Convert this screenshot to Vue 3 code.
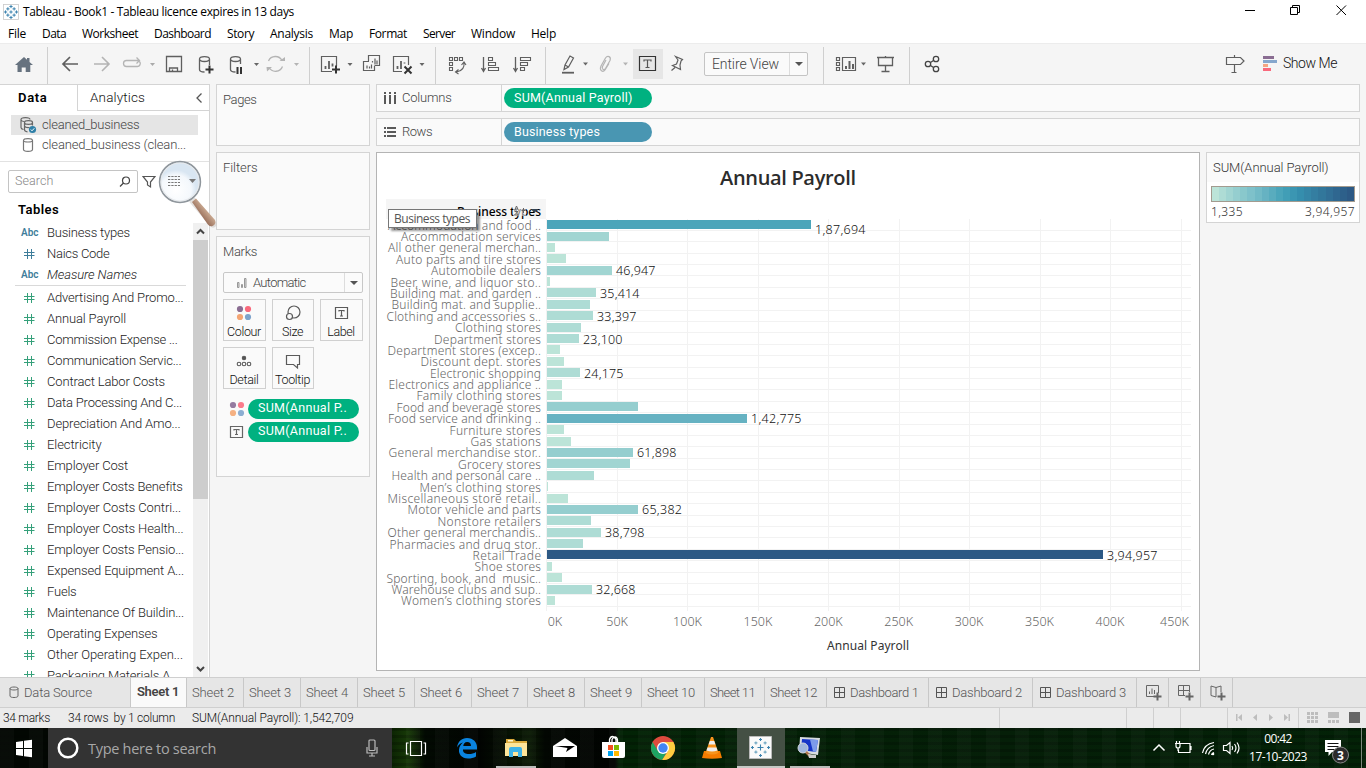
<script setup>
const fit = (el, { value }) => {
  if (!value) return
  el.style.letterSpacing = '0px'
  const n = el.textContent.length
  const w = el.getBoundingClientRect().width
  if (n) el.style.letterSpacing = ((value - w) / n).toFixed(3) + 'px'
}
const vFit = { mounted: fit }

const menus = [['File', 18], ['Data', 24], ['Worksheet', 56], ['Dashboard', 57], ['Story', 27], ['Analysis', 43], ['Map', 24], ['Format', 38], ['Server', 32], ['Window', 44], ['Help', 25]]

const dims = [['abc', 'Business types', 83], ['num', 'Naics Code', 62.5], ['abc', 'Measure Names', 90]]
const measures = [
  ['Advertising And Promo...', 136.5], ['Annual Payroll', 79], ['Commission Expense ...', 130.5], ['Communication Servic...', 134.5],
  ['Contract Labor Costs', 118], ['Data Processing And C...', 135], ['Depreciation And Amo...', 133.5], ['Electricity', 54.5],
  ['Employer Cost', 81], ['Employer Costs Benefits', 135.5], ['Employer Costs Contri...', 134], ['Employer Costs Health...', 136.5],
  ['Employer Costs Pensio...', 137], ['Expensed Equipment A...', 137], ['Fuels', 29.5], ['Maintenance Of Buildin...', 137],
  ['Operating Expenses', 110.5], ['Other Operating Expen...', 136], ['Packaging Materials A...', 132]
]

const palette = ['#bce4d8', '#aedcd5', '#a1d5d2', '#95cecf', '#89c8cc', '#7ec1ca', '#72bac6', '#66b2c2', '#59acbe', '#4ba5ba', '#419eb6', '#3b96b2', '#358ead', '#3586a7', '#347ea1', '#32779b', '#316f96', '#2f6790', '#2d608a', '#2c5985']

// label, label left edge, bar end, data label, data label width
const rows = [
  ['Accommodation and food ..', 388, 811, '1,87,694', 50.5], ['Accommodation services', 401, 609], ['All other general merchan..', 388, 555],
  ['Auto parts and tire stores', 396, 566], ['Automobile dealers', 431, 612, '46,947', 39.5], ['Beer, wine, and liquor sto..', 390.5, 550],
  ['Building mat. and garden ..', 390, 596, '35,414', 39.5], ['Building mat. and supplie..', 391.5, 590], ['Clothing and accessories s..', 386.5, 593, '33,397', 39.5],
  ['Clothing stores', 455, 581], ['Department stores', 434, 579, '23,100', 39.5], ['Department stores (excep..', 387.5, 560],
  ['Discount dept. stores', 420.5, 564], ['Electronic shopping', 430, 580, '24,175', 39.5], ['Electronics and appliance ..', 388.5, 562],
  ['Family clothing stores', 416.5, 562], ['Food and beverage stores', 396.5, 638], ['Food service and drinking ..', 388, 747, '1,42,775', 50.5],
  ['Furniture stores', 449.5, 564], ['Gas stations', 470.5, 571], ['General merchandise stor..', 388.5, 633, '61,898', 39.5],
  ['Grocery stores', 458, 630], ['Health and personal care ..', 391.5, 594], ['Men’s clothing stores', 419.5, 548],
  ['Miscellaneous store retail..', 387.5, 568], ['Motor vehicle and parts', 407.5, 638, '65,382', 40], ['Nonstore retailers', 437.5, 591],
  ['Other general merchandis..', 387.5, 601, '38,798', 39.5], ['Pharmacies and drug stor..', 389.5, 583], ['Retail Trade', 472.5, 1103, '3,94,957', 50.5],
  ['Shoe stores', 474.5, 552], ['Sporting, book, and  music..', 386.5, 562], ['Warehouse clubs and sup..', 391.5, 592, '32,668', 39.5],
  ['Women’s clothing stores', 401, 555]
]
const step = 11.39
const bars = rows.map(([name, left, end, label, lw], i) => {
  const v = (end - 547) / 1.41 * 1000
  return {
    name, left, end, label, lw,
    w: 541 - left,
    y: Math.round(220.15 + i * step),
    base: Math.round(229.6 + i * step),
    lineY: Math.round(219.5 + (i + 1) * step) - 0.5,
    lx: end + 4,
    ly: Math.round(229.6 + i * step) + (i === 0 ? 4 : 0),
    fill: palette[Math.max(0, Math.min(19, Math.floor((v - 1335) / 19681)))]
  }
})
const ticks = Array.from({ length: 10 }, (_, i) => ({ x: Math.round(546 + i * 70.5) + 0.5, t: i * 50 + 'K' }))
const tickX = i => (i === 0 ? 555 : i === 9 ? 1174.5 : 546.7 + i * 70.4)

const sheets = [[57, 42], [57, 42], [57, 42], [57, 42], [57, 42], [57, 42], [56, 42], [57, 42], [57, 42], [63, 48], [60, 45], [62, 47]]
const dashes = [[102, 68.5], [104, 70], [104, 70]]
const dots = [[-7, 0], [7, 0], [0, -7], [0, 7], [0, 0], [-4, -4], [4, -4], [-4, 4], [4, 4]]
</script>

<template>
  <div class="screen">
    <header class="titlebar">
      <svg class="logo" width="16" height="16" viewBox="-8 -8 16 16">
        <rect x="-7.5" y="-7.5" width="15" height="15" fill="#fff" stroke="#c9c9c9" stroke-width=".8" />
        <path v-for="(d, i) in dots" :key="i" :d="`M${d[0] * .78 - 1.6} ${d[1] * .78}h3.2M${d[0] * .78} ${d[1] * .78 - 1.6}v3.2`" stroke="#3b82ae" stroke-width="1" />
      </svg>
      <span v-fit="271">Tableau - Book1 - Tableau licence expires in 13 days</span>
      <svg class="winbtns" width="120" height="22" viewBox="1240 0 120 22" fill="none" stroke="#000" stroke-width="1">
        <path d="M1245 10.5h10M1290.500 7.500h7v7h-7zM1292.500 7v-1.500h7v7h-1.500M1336.500 5.500l9.500 9.500M1346 5.500l-9.500 9.500" />
      </svg>
    </header>
    <nav class="menubar"><span v-for="m in menus" :key="m[0]" :style="{ width: m[1] + 'px' }"><span v-fit="m[1]">{{ m[0] }}</span></span></nav>

    <div class="toolbar">
      <svg class="grp" width="47" height="41" viewBox="0 43 47 41"><path d="M15 65l9-8 3 2.700v-1.700h2.500v4l3.500 3h-2.700v7h-4.600v-4.500h-4v4.500h-4.200v-7z" fill="#66727f" /></svg>
      <svg class="grp sep" width="262" height="41" viewBox="47 43 262 41" fill="none" stroke="#5f5f5f" stroke-width="1.300">
        <path d="M78 64H63.500M70 57l-7 7 7 7" stroke-width="1.700" />
        <path d="M94 64h14.500M102 57l7 7-7 7" stroke="#b4b4b4" stroke-width="1.600" />
        <path d="M132 60.500h-5.500a3 3 0 000 6h10.500a3 3 0 002.500-5M131.500 60.500h8M136.500 57.500l3 3-3 3" stroke="#b4b4b4" />
        <path d="M150 63h5l-2.500 3z" fill="#aaa" stroke="none" />
        <path d="M166.500 56.500h15v15h-15zM169.500 71v-3h8v3M172.500 71v-1.500" />
        <path d="M199.500 59v10.500q0 2.500 5 2.500M199.500 59c0-3.300 10-3.300 10 0s-10 3.300-10 0M209.500 59v6" />
        <path d="M209.500 65.500v8M205.500 69.500h8" stroke="#333" stroke-width="2" />
        <path d="M230.500 59v10.500q0 2.500 5 2.500M230.500 59c0-3.300 10-3.300 10 0s-10 3.300-10 0M240.500 59v5" />
        <path d="M237.500 67v7M241 67v7" stroke="#333" stroke-width="2" />
        <path d="M254 63h5l-2.500 3z" fill="#666" stroke="none" />
        <path d="M268.500 61a7.500 7.500 0 0113.500-.500M282.500 66.500a7.500 7.500 0 01-13.500 1" stroke="#b4b4b4" />
        <path d="M279.500 61h5.500v-4zM266.500 67h5.500l-5 4.500z" fill="#b4b4b4" stroke="none" />
        <path d="M294 63h5l-2.500 3z" fill="#b4b4b4" stroke="none" />
      </svg>
      <svg class="grp sep" width="126" height="41" viewBox="309 43 126 41" fill="none" stroke="#5f5f5f" stroke-width="1.200">
        <path d="M332 71.500h-10.500v-15h15V66" />
        <path d="M325.500 69v-3M329 69v-8M332.500 66.500v-3" stroke-width="1.800" />
        <path d="M336 65.500v8M332 69.500h8" stroke="#333" stroke-width="2" />
        <path d="M347.500 63h5l-2.500 3z" fill="#666" stroke="none" />
        <path d="M368.500 61v-5.500h11v10h-5M372.500 62.500v-1.500M375 64.500v-6M377 64.500v-4M369 61.500h-5.500v9h11V66M367 68.500v-3M369.500 68.500v-2M371.500 68.500v-4" />
        <path d="M402 71.500h-8.500v-15h15V65" />
        <path d="M397.500 69v-3M401 69v-8M404.500 63.500v-1" stroke-width="1.800" />
        <path d="M404.500 66.500l7 7M411.500 66.500l-7 7" stroke="#333" stroke-width="2" />
        <path d="M419.500 63h5l-2.500 3z" fill="#666" stroke="none" />
      </svg>
      <svg class="grp sep" width="110" height="41" viewBox="435 43 110 41" fill="none" stroke="#5f5f5f" stroke-width="1.100">
        <path d="M449.500 57.500h3v3h-3zM454.500 57.500h3v3h-3zM459.500 57.500h3v3h-3zM449.500 62.500h3v3h-3zM449.500 67.500h3v3h-3z" />
        <path d="M464 62.500q1 8-7.500 9.500M461.500 65l2.500-3 2 3M458.500 69.500l-3 2.500 3 2" />
        <path d="M483.500 57v14M481.500 68l2 3.500 2-3.500" stroke-width="1.300" />
        <path d="M488.500 57.500h4v3h-4zM488.500 62.500h7v3h-7zM488.500 67.500h10v3h-10z" />
        <path d="M515.500 57v14M513.500 68l2 3.500 2-3.500" stroke-width="1.300" />
        <path d="M520.500 57.500h10v3h-10zM520.500 62.500h7v3h-7zM520.500 67.500h4v3h-4z" />
      </svg>
      <svg class="grp sep" width="159" height="41" viewBox="545 43 159 41" fill="none" stroke="#5f5f5f" stroke-width="1.200">
        <path d="M564 69.500l1-4.500 5-9 3.500 2-5 9zM565 65l3.500 2" />
        <path d="M562 72.700h12" stroke-width="1.800" />
        <path d="M583 62.500h5l-2.500 3z" fill="#666" stroke="none" />
        <path d="M606 60l-3.500 6.500c-1 3 1.500 4 3 2l4.500-8c1.500-4-2.500-5.500-4.500-2.500l-4.500 8c-2 5 2 6.500 4 4l4-6.500" stroke="#b4b4b4" />
        <path d="M623 62.500h5l-2.500 3z" fill="#b4b4b4" stroke="none" />
        <path d="M633 49h30v30h-30z" fill="#e6e6e6" stroke="none" />
        <path d="M639.500 56.500h16v14h-16z" stroke="#333" />
        <path d="M644 61.500v-1.500h7v1.500M647.500 60v7.500M645.500 67.500h4" stroke="#555" />
        <path d="M675.500 56.500l7 3-1.500 1.500-1 4 .500 4.500-8-4 4-1.500 1.500-4zM675 67.500l-3.500 3" />
      </svg>
      <div class="viewsel"><span v-fit="67">Entire View</span><i></i></div>
      <svg class="grp" width="15" height="41" />
      <svg class="grp sep" width="86" height="41" viewBox="823 43 86 41" fill="none" stroke="#5f5f5f" stroke-width="1.200">
        <path d="M836.500 57.500h3v3h-3zM836.500 62.500h3v3h-3zM836.500 67.500h3v3h-3zM842.500 57.500h13v13h-13z" />
        <path d="M846 69v-3M849.500 69v-8M853 69v-5" stroke-width="2" />
        <path d="M861 62.500h5l-2.500 3z" fill="#666" stroke="none" />
        <path d="M877 57.500h17M878.500 57.500v8h14v-8M885.500 56v2M885.500 66v5.500M881.500 71.500h8" stroke-width="1.300" />
      </svg>
      <svg class="grp sep" width="60" height="41" viewBox="909 43 60 41" fill="none" stroke="#444" stroke-width="1.300">
        <circle cx="928" cy="64" r="2.700" /><circle cx="936" cy="59" r="2.700" /><circle cx="936" cy="69" r="2.700" /><path d="M930.500 62.500l3-2M930.500 65.500l3 2" />
      </svg>
      <div class="showme">
        <svg width="60" height="41" viewBox="1223 43 60 41" fill="none" stroke="#5f5f5f" stroke-width="1.200">
          <path d="M1226.500 57.500h14l3.500 3.500-3.500 3.500h-14zM1234.500 55v2M1234.500 65v7M1231.500 72.500h5" />
          <g stroke="none"><path fill="#8a6d92" d="M1263 56h11v3h-11z" /><path fill="#86a7cd" d="M1263 60h14v3h-14z" /><path fill="#f4a582" d="M1263 64h5v3h-5z" /><path fill="#f9697c" d="M1263 68h8v3h-8z" /></g>
        </svg>
        <span v-fit="54">Show Me</span>
      </div>
    </div>

    <main class="work">
      <aside class="datapane">
        <div class="tabs2"><div class="on"><b v-fit="29.5">Data</b></div><div class="off"><span v-fit="55">Analytics</span>
          <svg width="8" height="12" viewBox="0 0 8 12"><path d="M6.500 1.500L2 6l4.500 4.500" fill="none" stroke="#555" stroke-width="1.300" /></svg></div></div>
        <div class="sources">
          <div class="src sel">
            <svg width="18" height="18" viewBox="19 116 18 18" fill="none" stroke="#666" stroke-width="1.200">
              <path d="M21 119.500c0-2.600 9-2.600 9 0M21 119.500v8q0 1.500 2.500 2M21 120q1 1.500 3 1.500M24.500 122.500c0-2.400 8-2.400 8 0s-8 2.400-8 0v7q0 2 3 2.300M32.500 122.500v3M24.500 126q1 2 5 1.500" />
              <circle cx="32.500" cy="129.500" r="3.600" fill="#2f80a8" stroke="none" /><path d="M30.800 129.500l1.200 1.300 2.300-2.500" stroke="#fff" stroke-width="1" />
            </svg><span v-fit="97.500">cleaned_business</span>
          </div>
          <div class="src">
            <svg width="18" height="18" viewBox="19 136 18 18" fill="none" stroke="#777" stroke-width="1.200"><path d="M23.500 140.500c0-2.500 9-2.500 9 0v9c0 2.500-9 2.500-9 0zM23.500 140.500c0 2 9 2 9 0" /></svg>
            <span v-fit="144">cleaned_business (clean...</span>
          </div>
        </div>
        <div class="searchrow">
          <div class="search"><span v-fit="38.500">Search</span><svg width="12" height="12" viewBox="0 0 12 12" fill="none" stroke="#444" stroke-width="1.200"><circle cx="7" cy="4.500" r="3.500" /><path d="M4.500 7L1 10.500" /></svg></div>
          <svg width="14" height="14" viewBox="0 0 14 14"><path d="M1 1.500h12L8.500 7v5l-3-2V7z" fill="none" stroke="#555" stroke-width="1.200" /></svg>
        </div>
        <h4 class="tables"><span v-fit="41">Tables</span></h4>
        <div class="fields">
          <div class="list">
            <div v-for="(d, i) in dims" :key="d[1]" class="f" :class="{ it: i === 2 }">
              <b v-if="d[0] === 'abc'" class="abc">Abc</b>
              <svg v-else class="hash blue" viewBox="0 0 12 12"><path d="M4.500 1v10M8.500 1v10M1 4.500h10.500M1 7.500h10.500" /></svg>
              <span v-fit="d[2]">{{ d[1] }}</span>
            </div>
            <hr>
            <div v-for="m in measures" :key="m[0]" class="f">
              <svg class="hash" viewBox="0 0 12 12"><path d="M4.500 1v10M8.500 1v10M1 4.500h10.500M1 7.500h10.500" /></svg>
              <span v-fit="m[1]">{{ m[0] }}</span>
            </div>
          </div>
          <div class="scroll">
            <svg width="15" height="17" viewBox="0 0 15 17"><path d="M4 10.500L7.500 7l3.500 3.500" fill="none" stroke="#444" stroke-width="2" /></svg>
            <div class="thumb"></div>
            <svg width="15" height="17" viewBox="0 0 15 17"><path d="M4 7l3.500 3.500L11 7" fill="none" stroke="#444" stroke-width="2" /></svg>
          </div>
        </div>
        <svg class="lens" width="64" height="74" viewBox="155 156 64 74">
          <defs>
            <radialGradient id="glass" cx=".4" cy=".7"><stop offset="0" stop-color="#fff" /><stop offset=".75" stop-color="#f4f8fc" /><stop offset="1" stop-color="#d9e6f2" /></radialGradient>
            <linearGradient id="wood" x1="0" y1="1" x2="1" y2="0"><stop offset=".3" stop-color="#8b5f4c" /><stop offset=".6" stop-color="#c8a78f" /><stop offset="1" stop-color="#7a6050" /></linearGradient>
          </defs>
          <path d="M193 201l20 23" stroke="#c9c4c0" stroke-width="7" stroke-linecap="round" opacity=".5" />
          <path d="M192 202l4-3.500 19 21.500q1.500 4-2.500 6-3 1-5-2z" fill="url(#wood)" />
          <circle cx="180" cy="182" r="20.300" fill="url(#glass)" stroke="#8f969c" stroke-width="1.800" />
          <circle cx="180" cy="182" r="19" fill="none" stroke="#e6e9ec" stroke-width="1.200" />
          <path d="M168 176.500h12M168 179.500h12M168 182.500h12M168 185.500h12" stroke="#777" stroke-width="1" stroke-dasharray="2.300 1" />
          <path d="M189 179h7l-3.500 4z" fill="#777" />
        </svg>
      </aside>

      <section class="cards">
        <div class="card pages"><span v-fit="33.500">Pages</span></div>
        <div class="card filters"><span v-fit="34.500">Filters</span></div>
        <div class="card marks">
          <span v-fit="34">Marks</span>
          <div class="auto">
            <svg width="12" height="12" viewBox="0 0 12 12" fill="#ddd" stroke="#999"><path d="M1.500 5.500h1.500v5H1.500zM5.500 7.500h1v3h-1zM8.500 1.500h1.500v9H8.500z" /></svg>
            <span v-fit="52.500">Automatic</span><i></i>
          </div>
          <div class="tiles">
            <div><svg width="24" height="22" viewBox="232 302 24 22"><circle cx="240" cy="309" r="3.100" fill="#8a6d92" /><circle cx="248" cy="309" r="3.100" fill="#f9697c" /><circle cx="240" cy="317" r="3.100" fill="#f4a574" /><circle cx="248" cy="317" r="3.100" fill="#7ea3cb" /></svg><span v-fit="34">Colour</span></div>
            <div><svg width="24" height="22" viewBox="281 302 24 22" fill="#fafafa" stroke="#5a5a5a" stroke-width="1.200"><circle cx="294" cy="312" r="6" /><circle cx="289.500" cy="316.500" r="3" /></svg><span v-fit="21">Size</span></div>
            <div><svg width="24" height="22" viewBox="328 302 24 22" fill="none" stroke="#5a5a5a" stroke-width="1.200"><path d="M334.500 307.500h12v11h-12z" /><path d="M338 311.500v-1h5v1M340.500 310.500v5.500M339 316h3" /></svg><span v-fit="27.500">Label</span></div>
            <div><svg width="24" height="22" viewBox="232 350 24 22" fill="none" stroke="#5a5a5a" stroke-width="1.100"><circle cx="244" cy="358" r="1.700" fill="#555" /><circle cx="239" cy="364" r="1.800" /><circle cx="244" cy="364" r="1.800" /><circle cx="249" cy="364" r="1.800" /></svg><span v-fit="29">Detail</span></div>
            <div><svg width="24" height="22" viewBox="281 350 24 22" fill="none" stroke="#5a5a5a" stroke-width="1.200"><path d="M286.500 355.500h13v9h-2v3.500l-4-3.500h-7z" /></svg><span v-fit="35">Tooltip</span></div>
          </div>
          <div class="enc">
            <svg width="16" height="16" viewBox="-8 -8 16 16"><circle cx="-4" cy="-4" r="3.100" fill="#957ba0" /><circle cx="4" cy="-4" r="3.100" fill="#fa7b8b" /><circle cx="-4" cy="4" r="3.100" fill="#f5b183" /><circle cx="4" cy="4" r="3.100" fill="#8caed2" /></svg>
            <div class="pill"><span v-fit="89">SUM(Annual P..</span></div>
          </div>
          <div class="enc">
            <svg width="16" height="16" viewBox="-8 -8 16 16" fill="none" stroke="#666" stroke-width="1.200"><path d="M-6.500-5.500h12v11h-12z" /><path d="M-3-1.500v-1h5v1M-.500-2.500v5M-2 2.500h3" /></svg>
            <div class="pill"><span v-fit="89">SUM(Annual P..</span></div>
          </div>
        </div>
      </section>

      <section class="canvas">
        <div class="shelf">
          <div class="nm"><svg width="14" height="14" viewBox="0 0 14 14" fill="#5a5a5a"><path d="M1 1h2v2H1zM6 1h2v2H6zM11 1h2v2h-2zM1 4h2v9H1zM6 4h2v9H6zM11 4h2v9h-2z" /></svg><span v-fit="49.500">Columns</span></div>
          <div class="pill"><span v-fit="118.500">SUM(Annual Payroll)</span></div>
        </div>
        <div class="shelf">
          <div class="nm"><svg width="14" height="14" viewBox="0 0 14 14" fill="#5a5a5a"><path d="M1 2h2v2H1zM1 6h2v2H1zM1 10h2v2H1zM4 2h9v2H4zM4 6h9v2H4zM4 10h9v2H4z" /></svg><span v-fit="30">Rows</span></div>
          <div class="pill blue"><span v-fit="86">Business types</span></div>
        </div>
        <div class="below">
          <div class="view">
            <svg width="822" height="517" viewBox="377 153 822 517">
              <text class="t1" x="720" y="185" textLength="136">Annual Payroll</text>
              <rect x="386" y="199" width="160" height="20" fill="#f5f5f5" />
              <text class="hd" x="457" y="215.500" textLength="84">Business types</text>
              <g stroke="#f2f2f2"><path v-for="t in ticks" :key="t.t" :d="`M${t.x} 219V611`" /><path v-for="b in bars" :key="b.name" :d="`M547 ${b.lineY}H1191`" /></g>
              <g v-for="b in bars" :key="b.name">
                <rect x="547" :y="b.y" :width="b.end - 547" height="9" :fill="b.fill" />
                <text class="rl" :x="b.left" :y="b.base" :textLength="b.w">{{ b.name }}</text>
                <text v-if="b.label" class="vl" :x="b.lx" :y="b.ly" :textLength="b.lw">{{ b.label }}</text>
              </g>
              <text v-for="(t, i) in ticks" :key="t.t" class="ax" :x="tickX(i)" y="626">{{ t.t }}</text>
              <text class="at" x="827" y="650" textLength="82">Annual Payroll</text>
              <path d="M513 205h13v11h-13z" fill="#f5f5f5" opacity=".55" />
              <g fill="none" stroke="#666" stroke-width="1"><path d="M514.500 210.500l2-4.500 2 4.500M515.300 209h2.400M514.500 211.500h3.500l-3.500 3.500h4M523.500 208v5M521.500 210.500h4" /></g>
              <path d="M531 209h7l-3.500 4z" fill="#345" />
            </svg>
            <div class="tip"><span v-fit="76">Business types</span></div>
          </div>
          <div class="legend">
            <span v-fit="115.500">SUM(Annual Payroll)</span>
            <div class="ramp">
              <div class="steps"><i v-for="c in palette" :key="c" :style="{ background: c }"></i></div>
              <div class="ends"><span v-fit="32">1,335</span><span v-fit="50">3,94,957</span></div>
            </div>
          </div>
        </div>
      </section>
    </main>

    <div class="sheettabs">
      <div class="ds"><svg width="10" height="13" viewBox="0 0 10 13" fill="none" stroke="#666"><path d="M1 2.500c0-2 8-2 8 0v7.500c0 2-8 2-8 0zM1 2.500c0 2 8 2 8 0" /></svg><span v-fit="68">Data Source</span></div>
      <div v-for="(s, i) in sheets" :key="i" class="tab" :class="{ cur: i === 0 }" :style="{ width: s[0] + 'px' }"><span v-fit="s[1]">Sheet {{ i + 1 }}</span></div>
      <div v-for="(s, i) in dashes" :key="'d' + i" class="tab dash" :style="{ width: s[0] + 'px' }"><svg width="12" height="12" viewBox="0 0 12 12" fill="none" stroke="#555"><path d="M.500.500h10v10H.500zM5.500.500v10M.500 5.500h10" /></svg><span v-fit="s[1]">Dashboard {{ i + 1 }}</span></div>
      <div class="tab add"><svg width="16" height="16" viewBox="0 0 16 16" fill="none" stroke="#666"><path d="M8 11.500H.500V.500h12V8M3.500 9V6.500M6 9V3.500M8.500 9V5" /><path d="M11.500 7.500v8M7.500 11.500h8" stroke-width="2" /></svg></div>
      <div class="tab add"><svg width="16" height="16" viewBox="0 0 16 16" fill="none" stroke="#666"><path d="M7 10.500H.500V.500h11V7M5.500.500v10M.500 5.500h11" /><path d="M11.500 7.500v8M7.500 11.500h8" stroke-width="2" /></svg></div>
      <div class="tab add"><svg width="16" height="16" viewBox="0 0 16 16" fill="none" stroke="#666"><path d="M6 12l-5-1.500V1l5 1.500L11 1v6M6 2.500V12" /><path d="M11.500 7.500v8M7.500 11.500h8" stroke-width="2" /></svg></div>
    </div>

    <div class="status">
      <span class="s1"><span v-fit="47">34 marks</span></span><span class="s2"><span v-fit="107">34 rows&nbsp; by 1 column</span></span><span class="s3"><span v-fit="161.500">SUM(Annual Payroll): 1,542,709</span></span>
      <svg width="367" height="20" viewBox="999 708 367 20">
        <path d="M999.500 708v20M1126.500 708v20M1153.500 708v20M1180.500 708v20M1227.500 708v20M1298.500 708v20" stroke="#cfcfcf" />
        <g fill="#bdbdbd"><path d="M1236 714h1.500v7h-1.500zM1242 714v7l-4-3.500zM1257 714v7l-4-3.500zM1269 714v7l4-3.500zM1284 714v7l4-3.500zM1288.500 714h1.500v7h-1.500z" />
          <path d="M1307 712h3v3h-3zM1311 712h3v3h-3zM1315 712h3v3h-3zM1307 716h3v3h-3zM1311 716h3v3h-3zM1315 716h3v3h-3zM1307 720h3v3h-3zM1311 720h3v3h-3zM1315 720h3v3h-3zM1328 712h11v6h-11zM1328 720h3v3h-3zM1332 720h3v3h-3zM1336 720h3v3h-3z" /></g>
        <path d="M1349 712h11v11h-11z" fill="#666" />
      </svg>
    </div>

    <footer class="taskbar">
      <svg width="48" height="40" viewBox="0 728 48 40"><path d="M16 742l7-1v7h-7zM24 740.800l8-1v8.200h-8zM16 749h7v7l-7-1zM24 749h8v8.200l-8-1z" fill="#fff" /></svg>
      <div class="tsearch">
        <svg width="22" height="22" viewBox="0 0 22 22"><circle cx="11" cy="11" r="9.300" fill="none" stroke="#fff" stroke-width="2.500" /></svg>
        <span v-fit="128">Type here to search</span>
        <svg width="12" height="18" viewBox="0 0 12 18" fill="none" stroke="#bbb" stroke-width="1.200"><rect x="3" y="1" width="6" height="10.500" rx="1" /><path d="M1 8v6h10V8M6 14v3M3 17h6" /></svg>
      </div>
      <svg width="748" height="40" viewBox="392 728 748 40">
        <g fill="none" stroke="#fff" stroke-width="1.200"><path d="M410.500 741.500h11v14h-11zM408.500 743h-2v11h2M423.500 743h2v11h-2" /></g>
        <path fill="#0a84e0" d="M457 747.500c1-6 4.500-9.500 10-9.500 6.500 0 10 4.500 10 9v2.500h-14c0 3.500 2.500 4.500 6 4.500 2.500 0 5-.600 7-2v4.500c-2.500 1.500-5 2-8 2-6.500 0-9.500-4.500-9-9 .300-3 2-5.500 4-7-3 .500-5 3-6 5zM463.300 746h7.700c0-2.500-1.300-4-3.800-4s-3.700 1.800-3.900 4z" />
        <path fill="#d9a93a" d="M506 739h8l2 2h11v6h-21z" /><path fill="#fde59a" d="M505 743h22v13h-22z" /><path fill="#fff6cf" d="M508 740h5v1.500h-5z" /><path fill="#3db3e8" d="M509 749q0-2 2-2h9q2 0 2 2v8h-4v-5h-5v5h-4z" />
        <path fill="#b9bcb9" d="M496 766h40v2h-40zM790 766h40v2h-40z" />
        <path fill="#fff" d="M553 746l12-8 12 8v11h-24z" /><path fill="#000" d="M555 746h20l-9 6 1.500-4z" />
        <path fill="none" stroke="#fff" stroke-width="1.300" d="M609.500 742v-2.500q1-3 3-3t3.500 3v2.500M612 742v-2.500q1-2.500 3-2.500t2.500 3v2" /><path fill="#fff" d="M602 742h23v14q0 2-2 2h-19q-2 0-2-2z" /><path fill="#f25022" d="M608 745h5v5h-5z" /><path fill="#7fba00" d="M614 745h5v5h-5z" /><path fill="#00a4ef" d="M608 751h5v5h-5z" /><path fill="#ffb900" d="M614 751h5v5h-5z" />
        <circle cx="663" cy="748" r="12" fill="#dd4b3e" /><path fill="#ffcd40" d="M663 742h10.400A12 12 0 01662 760l6-9z" /><path fill="#1da462" d="M652.600 742A12 12 0 00662 760l5.500-9-4.500 2-5-2z" /><circle cx="663" cy="748" r="6" fill="#fff" /><circle cx="663" cy="748" r="4.700" fill="#4285f4" />
        <path fill="#f57c00" d="M704 751h16l2 7q-10 1.500-20 0z" /><path fill="#f7941d" d="M711 737h2l5.500 16q-6.500 3-13 0z" /><path fill="#eee" d="M709.800 741h4.400l1.300 3.500h-7zM707.500 747.500h9l1 3q-5.500 2-11 0z" />
        <path fill="#445044" d="M737 728h48v38h-48z" /><path fill="#c5c9c5" d="M737 766h48v2h-48z" /><path fill="#fafafa" stroke="#bbb" d="M749.500 736.500h22v22h-22z" />
        <g transform="translate(760.500 747.500)"><path v-for="(d, i) in dots" :key="i" :d="`M${d[0] * 1.150 - (i === 4 ? 3 : 1.500)} ${d[1] * 1.150}h${i === 4 ? 6 : 3}M${d[0] * 1.150} ${d[1] * 1.150 - (i === 4 ? 3 : 1.500)}v${i === 4 ? 6 : 3}`" :stroke="i > 4 ? '#6da5c0' : '#3b82ae'" stroke-width="1.100" /></g>
        <path fill="#d8dce0" d="M800 737l20 1-2 17-19-3z" /><path fill="#1636c8" d="M802 739l16 1-2 12-15-2z" /><path fill="#7d9bea" d="M810 739.500l8 .500-2 12-3-.500z" /><circle cx="803" cy="748" r="5" fill="#9fb6dc" stroke="#d0d5dc" /><path d="M806 752l5 5" stroke="#b07850" stroke-width="2.500" /><path fill="#ccc" d="M808 754l8 1v3h-7z" />
      </svg>
      <svg class="tray" width="100" height="40" viewBox="1149 728 100 40" fill="none" stroke="#fff" stroke-width="1.200">
        <path d="M1153.500 750.500l5.500-5.500 5.500 5.500" stroke-width="1.500" />
        <path d="M1181 743.500h9v9h-11.500v-3M1191 746v4M1175 743.500h6M1176 743.500v2.500q0 2 2 2t2-2v-2.500M1176.500 741v2M1179.500 741v2M1178 748v3" />
        <path d="M1202.500 753c1-5 5-9.500 11.500-10.500M1205.500 754c1-4.500 4-7.500 8.500-8.500M1208.500 754.500c.700-3 3-5 5.500-5.500M1211.500 755c.300-1.500 1-2.200 2.500-2.500" /><circle cx="1213" cy="754" r="1.300" fill="#fff" stroke="none" />
        <path d="M1223.500 745.500h3l3.500-3v11l-3.500-3h-3zM1232 746q1.500 2 0 4M1234.500 744q3 4 0 8M1237 742.500q4 5.500 0 11" />
      </svg>
      <div class="clock"><span v-fit="27.500">00:42</span><span v-fit="58">17-10-2023</span></div>
      <svg class="note" width="50" height="40" viewBox="1316 728 50 40">
        <path d="M1325 740h16v12h-9l-3.500 4v-4h-3.500z" fill="#fff" /><path d="M1327.500 743.500h11M1327.500 746.500h11M1327.500 749.500h7" stroke="#111" />
        <circle cx="1340.500" cy="755" r="8" fill="#2b2b2b" stroke="#888" /><text x="1337" y="759.500">3</text><path d="M1361.500 728v40" stroke="#7c877c" />
      </svg>
    </footer>
  </div>
</template>

<style>
html, body { margin: 0; overflow: hidden; }
</style>
<style scoped>
.screen { width: 1366px; height: 768px; overflow: hidden; display: flex; flex-direction: column; background: #f5f5f5; font: 350 12.5px/1 Roboto, "Open Sans", sans-serif; color: #222; }
.screen * { box-sizing: border-box; }
.screen svg { display: block; flex: none; }
span { white-space: pre; }
span > span { display: inline-block; }
.titlebar { height: 22px; background: #fff; display: flex; align-items: center; font: 12px/16px "Open Sans", sans-serif; color: #000; padding: 2px 6px 0 3px; flex: none; }
.logo { margin: -1px 4px 0 0; }
.winbtns { margin: -2px 0 0 auto; }
.menubar { height: 21px; flex: none; background: #fff; display: flex; gap: 16px; padding: 4px 8px 0; font: 12px/16px "Open Sans", sans-serif; color: #000; }
.menubar > span { flex: none; }
.toolbar { height: 41px; flex: none; display: flex; background: #f5f5f5; border-top: 1px solid #ececec; }
.grp { margin-top: -1px; }
.sep { background: linear-gradient(#cfcfcf, #cfcfcf) 0 4px / 1px 37px no-repeat; }
.viewsel { width: 104px; height: 24px; margin-top: 8px; flex: none; border: 1px solid #c4c4c4; border-radius: 2px; background: #fafafa; display: flex; align-items: center; justify-content: space-between; padding-left: 7px; font-size: 14px; color: #444; }
.viewsel i, .auto i { width: 18px; height: 100%; border-left: 1px solid #ddd; display: grid; place-items: center; margin-left: auto; }
.viewsel i::after, .auto i::after { content: ""; border: 4px solid transparent; border-top: 4px solid #555; border-bottom: 0; }
.showme { margin-left: auto; display: flex; margin-right: 29px; font-size: 14px; line-height: 39px; color: #111; }
.showme svg { margin-top: -1px; }
.work { flex: none; height: 593px; display: flex; }
.datapane { width: 210px; flex: none; position: relative; background: #fff; border: solid #d4d4d4; border-width: 1px 1px 0 0; display: flex; flex-direction: column; }
.tabs2 { display: flex; height: 26px; font-size: 13.500px; line-height: 25px; flex: none; color: #111; }
.on { width: 77px; padding-left: 18px; color: #000; font-size: 13px; }
.on b { display: inline-block; font-weight: 600; }
.off { flex: 1; border: solid #d4d4d4; border-width: 0 0 1px 1px; display: flex; align-items: center; justify-content: space-between; padding: 0 6px 0 12px; }
.sources { height: 51px; border-bottom: 1px solid #e2e2e2; padding: 4px 11px 0; flex: none; }
.src { display: flex; align-items: center; height: 20px; padding-left: 8px; gap: 5px; font-size: 13px; color: #444; }
.src span { padding-bottom: 1px; }
.sel { background: #e5e5e5; }
.searchrow { display: flex; align-items: center; gap: 4px; padding: 8px 0 0 8px; flex: none; }
.search { width: 130px; height: 23px; border: 1px solid #c4c4c4; border-radius: 2px; padding: 0 6px; display: flex; align-items: center; justify-content: space-between; color: #888; font-size: 12.500px; }
.tables { margin: 8px 0 0 18px; height: 22px; font-size: 13px; line-height: 17px; color: #000; font-weight: 600; flex: none; }
.tables span { display: inline-block; }
.fields { flex: 1; min-height: 0; display: flex; overflow: hidden; }
.list { width: 193px; overflow: hidden; margin-top: -1px; }
.f { height: 21px; display: flex; align-items: center; color: #222; font-size: 13px; }
.f span { display: inline-block; }
.it span { font-style: italic; }
.abc { width: 26px; margin-left: 21px; font-size: 10px; font-weight: 600; color: #3e7d9a; }
.screen .hash { width: 12px; height: 12px; margin: 0 12px 0 23px; fill: none; stroke: #35a07a; stroke-width: 1; }
.screen .hash.blue { stroke: #3e7d9a; }
hr { border: 0; height: 1px; background: #d9d9d9; margin: 0 7px 1px 15px; }
.scroll { width: 15px; background: #f0f0f0; display: flex; flex-direction: column; }
.thumb { height: 259px; background: #cdcdcd; margin-bottom: auto; }
.lens { position: absolute; left: 155px; top: 71px; z-index: 3; }
.cards { width: 154px; margin-left: 6px; flex: none; display: flex; flex-direction: column; gap: 6px; }
.card { background: #fafafa; border: 1px solid #d4d4d4; padding: 8px 6px; font-size: 13px; color: #444; }
.card > span { display: inline-block; }
.pages { height: 62px; }
.filters { height: 78px; }
.marks { height: 241px; }
.auto { height: 21px; border: 1px solid #c8c8c8; border-radius: 2px; background: #fbfbfb; display: flex; align-items: center; padding-left: 12px; gap: 5px; margin-top: 14px; }
.tiles { display: grid; grid-template-columns: 43px 42px 43px; gap: 6px; margin-top: 6px; }
.tiles > div { height: 42px; border: 1px solid #d0d0d0; display: flex; flex-direction: column; align-items: center; color: #111; font-size: 12.500px; padding-right: 1px; }
.tiles svg { margin-top: 2px; }
.tiles span { margin-top: 2px; }
.enc { display: flex; align-items: center; height: 23px; padding-left: 6px; gap: 3px; }
.tiles + .enc { margin-top: 8px; }
.pill { width: 111px; height: 20px; border-radius: 10px; background: #00b180; color: #fff; font-size: 12.500px; font-weight: 450; display: flex; align-items: center; padding-left: 10px; }
.canvas { margin-left: 6px; width: 984px; display: flex; flex-direction: column; gap: 6px; }
.shelf { height: 28px; flex: none; border: 1px solid #d4d4d4; background: #fafafa; display: flex; align-items: center; }
.nm { width: 125px; height: 26px; border-right: 1px solid #d4d4d4; display: flex; align-items: center; gap: 5px; padding-left: 6px; font-size: 13px; color: #444; }
.nm span { padding-bottom: 1px; }
.shelf .pill { width: 148px; margin-left: 2px; }
.pill.blue { background: #4996b2; }
.below { display: flex; gap: 6px; align-items: flex-start; }
.view { width: 824px; height: 519px; background: #fff; border: 1px solid #b4b4b4; position: relative; }
.view text { white-space: pre; }
.t1 { font: 600 20px "Open Sans", sans-serif; fill: #2c2c2c; }
.hd { font: 500 12px "Noto Sans", sans-serif; fill: #000; }
.rl { font: 350 12px "Noto Sans", sans-serif; fill: #666; }
.vl { font: 350 12.500px "Noto Sans", sans-serif; fill: #111; }
.ax { font: 350 12.500px "Noto Sans", sans-serif; fill: #666; text-anchor: middle; }
.at { font: 450 12px "Noto Sans", sans-serif; fill: #333; }
.tip { position: absolute; left: 11px; top: 56px; width: 89px; height: 19px; background: #fff; border: 1px solid #777; box-shadow: 3px 3px 2px rgba(0, 0, 0, .4); font: 12px/17px "Open Sans", sans-serif; color: #555; padding-left: 5px; }
.tip span, .legend > span { display: inline-block; }
.legend { width: 154px; height: 71px; border: 1px solid #d4d4d4; background: #fafafa; font-size: 13px; color: #333; display: flex; flex-direction: column; }
.legend > span { margin: 8px 0 8px 6px; align-self: flex-start; }
.ramp { background: #fff; flex: 1; padding: 4px 4px 0; }
.steps { height: 16px; border: 1px solid #a39b8f; display: flex; }
.steps i { flex: 1; }
.ends { display: flex; justify-content: space-between; font: 350 12px/15px "Noto Sans", sans-serif; margin-top: 2px; }
.sheettabs { height: 31px; flex: none; background: #e6e6e6; border-top: 1px solid #cfcfcf; border-bottom: 1px solid #cfcfcf; display: flex; color: #555; font-size: 13px; }
.ds { width: 130px; display: flex; align-items: center; gap: 5px; padding-left: 9px; flex: none; }
.tab { flex: none; border-right: 1px solid #c8c8c8; display: flex; align-items: center; padding-left: 5px; }
.tab.cur { background: #fafafa; border-left: 1px solid #c8c8c8; color: #444; font-weight: 600; padding: 0 0 2px 6px; }
.dash { padding-left: 7px; gap: 4px; }
.add { width: 32px; padding-left: 9px; }
.status { height: 20px; flex: none; background: #ebebeb; display: flex; align-items: center; font-size: 12px; color: #111; padding-left: 3px; }
.s1 { width: 65px; } .s2 { width: 124px; }
.status svg { margin-left: auto; }
.taskbar { height: 40px; flex: none; display: flex; background: repeating-linear-gradient(90deg, rgba(255, 255, 255, .025) 0 14px, transparent 14px 29px), repeating-linear-gradient(rgba(0, 0, 0, .2) 0 3px, transparent 3px 7px), linear-gradient(90deg, #020702 0 391px, #0c2503 392px, #173907 408px, #020a02 425px, #010401 480px, #0b1c05 530px, #020702 545px, #010401 615px, #022305 619px, #051f08 1000px, #032207); color: #fff; }
.tsearch { width: 344px; background: #333; display: flex; align-items: center; padding: 0 14px 0 9px; gap: 9px; font: 14.500px "Open Sans", sans-serif; color: #a8a8a8; }
.tsearch svg:last-child { margin-left: auto; }
.tray { margin-left: 9px; }
.clock { width: 58px; display: flex; flex-direction: column; align-items: center; font: 12px/18px "Open Sans", sans-serif; padding-top: 2px; }
.clock span { flex: none; }
.note { margin-left: auto; }
.note text { font: 700 12px "Open Sans", sans-serif; fill: #fff; }
</style>
